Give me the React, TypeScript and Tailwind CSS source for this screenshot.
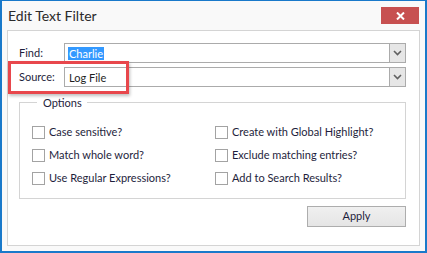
const leftOptions = ["Case sensitive?", "Match whole word?", "Use Regular Expressions?"]
const rightOptions = ["Create with Global Highlight?", "Exclude matching entries?", "Add to Search Results?"]

function Chevron() {
  return (
    <svg width="9" height="6" viewBox="0 0 9 6" className="block">
      <path d="M1 1 L4.5 4.5 L8 1" fill="none" stroke="#606060" strokeWidth="1.6" />
    </svg>
  )
}

function ComboBox({ value, selected }: { value: string; selected?: boolean }) {
  return (
    <div className="flex h-[20px] flex-1 items-stretch border border-[#ababab] bg-white">
      <div className="flex flex-1 items-center pl-[3px]">
        <span
          className={
            selected
              ? "bg-[#3399ff] px-[1px] leading-[13px] text-white"
              : "px-[1px] leading-[13px] text-[#1e1e1e]"
          }
        >
          {value}
        </span>
      </div>
      <div className="flex w-[16px] items-center justify-center border-l border-[#ababab] bg-[#e6e6e6]">
        <Chevron />
      </div>
    </div>
  )
}

function CheckOption({ label }: { label: string }) {
  return (
    <label className="flex h-[23px] items-center">
      <span className="h-[13px] w-[13px] border border-[#a3a3a3] bg-white" />
      <span className="ml-[4px] text-[#1e1e3c]">{label}</span>
    </label>
  )
}

export default function App() {
  return (
    <div className="flex h-[253px] w-[427px] flex-col border-x-2 border-b-2 border-t border-[#1979ca] bg-[#f9f9f9] font-['Lato'] text-[11px]">
      <div className="flex h-[29px] shrink-0 items-start justify-between">
        <h1 className="ml-[6px] mt-[7px] text-[14px] leading-[16px] text-[#2b2b2b]">Edit Text Filter</h1>
        <button className="mr-[6px] mt-[6px] flex h-[17px] w-[38px] items-center justify-center bg-[#c75050]">
          <svg width="9" height="8" viewBox="0 0 9 8">
            <path d="M1 0.5 L8 7.5 M8 0.5 L1 7.5" stroke="white" strokeWidth="2" />
          </svg>
        </button>
      </div>

      <div className="relative mx-[5px] mb-[5px] flex flex-1 flex-col border border-[#d4d4d4] bg-white pl-[11px] pr-[13px] pt-[12px]">
        <div className="flex items-center">
          <span className="w-[45px] text-[#1e1e3c]">Find:</span>
          <ComboBox value="Charlie" selected />
        </div>
        <div className="mt-[4px] flex items-center">
          <span className="w-[45px] text-[#1e1e3c]">Source:</span>
          <ComboBox value="Log File" />
        </div>

        <fieldset className="mt-[8px] border border-[#d4d4d4] pb-[8px] pl-[12px] pt-[11px]">
          <legend className="ml-[5px] pl-[6px] pr-[5px] leading-[15px] text-[#1e1e3c]">Options</legend>
          <div className="grid grid-cols-[183px_1fr]">
            <div className="flex flex-col">
              {leftOptions.map((o) => (
                <CheckOption key={o} label={o} />
              ))}
            </div>
            <div className="flex flex-col">
              {rightOptions.map((o) => (
                <CheckOption key={o} label={o} />
              ))}
            </div>
          </div>
        </fieldset>

        <div className="mt-[7px] flex justify-end">
          <button className="h-[21px] w-[99px] border border-[#adadad] bg-gradient-to-b from-[#f0f0f0] to-[#e5e5e5] text-[#1e1e3c]">
            Apply
          </button>
        </div>

        <div className="pointer-events-none absolute left-[0px] top-[30px] h-[33px] w-[121px] border-[3px] border-[#e8474c] shadow-[1px_2px_3px_rgba(0,0,0,0.25)]" />
      </div>
    </div>
  )
}
